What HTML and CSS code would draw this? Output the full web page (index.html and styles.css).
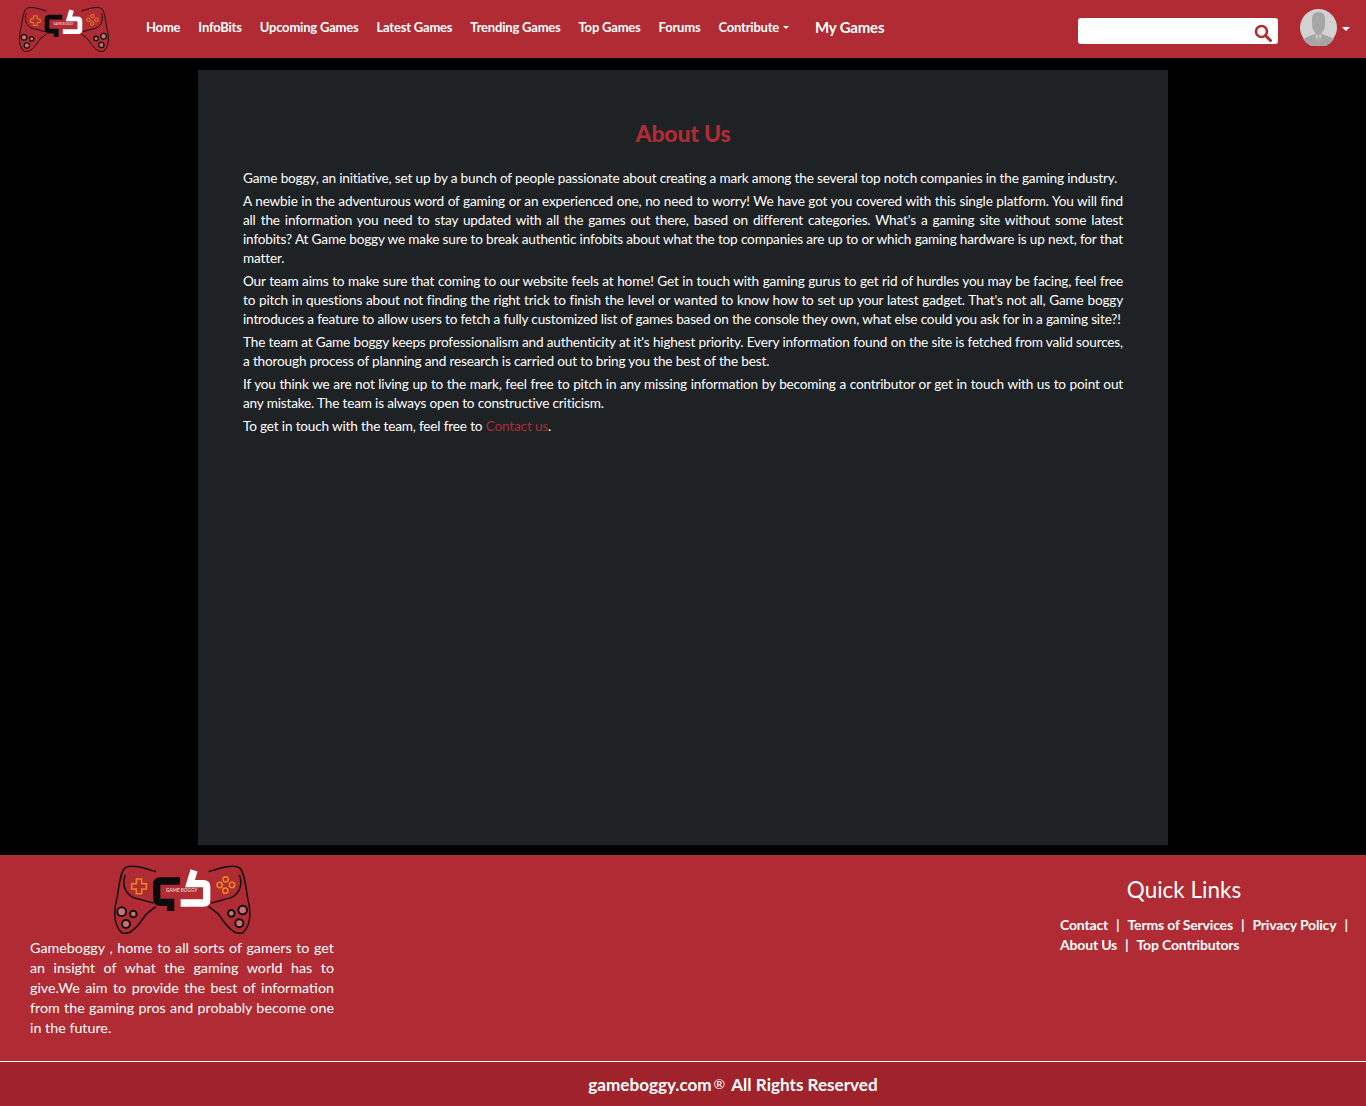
FILE: index.html
```html
<!DOCTYPE html>
<html lang="en">

<head>
    <meta charset="UTF-8">
    <title>About Us</title>
    <link rel="stylesheet" href="styles.css">
</head>

<body>
    <svg class="defs" width="0" height="0">
        <symbol id="logo" viewBox="70 25 415 210">
            <g fill="none" stroke="#111" stroke-width="4.500">
                <path d="M198 48C165 38 130 25 106 36C92 46 88 85 82 122C72 160 66 205 96 232C125 240 148 205 168 176L198 152"/>
                <path d="M106 58C96 82 102 112 130 126L190 142"/>
                <path d="M356 48C389 38 424 25 448 36C462 46 466 85 472 122C482 160 488 205 458 232C429 240 406 205 386 176L356 152"/>
                <path d="M448 58C458 82 452 112 424 126L364 142"/>
            </g>
            <g fill="none" stroke="#e8891c" stroke-width="4.500">
                <path d="M139 70h16v14h14v16h-14v14h-16v-14h-14v-16h14z"/>
                <circle cx="407" cy="71" r="8"/>
                <circle cx="389" cy="88" r="8"/>
                <circle cx="426" cy="88" r="8"/>
                <circle cx="406" cy="105" r="8"/>
            </g>
            <g fill="#c9727a" stroke="#111" stroke-width="6">
                <circle cx="95" cy="168" r="13"/>
                <circle cx="130" cy="175" r="10"/>
                <circle cx="108" cy="205" r="12"/>
                <circle cx="458" cy="163" r="13"/>
                <circle cx="424" cy="173" r="10"/>
                <circle cx="448" cy="203" r="12"/>
            </g>
            <path d="M270 76H212Q200 76 200 88V128Q200 140 212 140H242V166" fill="none" stroke="#0b0b0b" stroke-width="22"/>
            <path d="M312 44L300 84H340Q350 84 350 94V132Q350 142 340 142H272" fill="none" stroke="#fff" stroke-width="22"/>
        </symbol>
    </svg>

    <header class="topbar">
        <a href="#" class="brand">
            <svg class="brand-logo" viewBox="70 25 415 210">
                <use href="#logo" x="70" y="25" width="415" height="210"/>
                <text x="275" y="110" text-anchor="middle" class="logo-text">GAME BOGGY</text>
            </svg>
        </a>
        <nav class="nav">
            <a href="#">Home</a>
            <a href="#">InfoBits</a>
            <a href="#">Upcoming Games</a>
            <a href="#">Latest Games</a>
            <a href="#">Trending Games</a>
            <a href="#">Top Games</a>
            <a href="#">Forums</a>
            <a href="#" class="caret-link">Contribute</a>
            <a href="#" class="my-games">My Games</a>
        </nav>
        <div class="search">
            <svg class="search-icon" viewBox="0 0 18 18">
                <circle cx="7.500" cy="7.500" r="5.500" fill="none" stroke="#b02b33" stroke-width="2.600"/>
                <path d="M11.500 11.500L16.500 16.500" stroke="#b02b33" stroke-width="3" stroke-linecap="round"/>
            </svg>
        </div>
        <div class="user">
            <svg class="avatar" viewBox="0 0 37 37">
                <circle cx="18.500" cy="18.500" r="18.500" fill="#d2d2d2"/>
                <path d="M12 10Q12 3 18.500 3Q25 3 25 10V15Q25 21 22 23V25L30 28Q33 30 34 30A18.500 18.500 0 0 1 3 30Q4 30 7 28L15 25V23Q12 21 12 15Z" fill="#a6a6a6"/>
                <path d="M15.500 25L18.500 37L21.500 25L18.500 27Z" fill="#d2d2d2"/>
                <path d="M17.500 27.500H19.500L20 36H17Z" fill="#a6a6a6"/>
            </svg>
            <span class="user-caret"></span>
        </div>
    </header>

    <main class="page">
        <section class="about">
            <h1>About Us</h1>
            <p>Game boggy, an initiative, set up by a bunch of people passionate about creating a mark among the several top notch companies in the gaming industry.</p>
            <p>A newbie in the adventurous word of gaming or an experienced one, no need to worry! We have got you covered with this single platform. You will find all the information you need to stay updated with all the games out there, based on different categories. What's a gaming site without some latest infobits? At Game boggy we make sure to break authentic infobits about what the top companies are up to or which gaming hardware is up next, for that matter.</p>
            <p>Our team aims to make sure that coming to our website feels at home! Get in touch with gaming gurus to get rid of hurdles you may be facing, feel free to pitch in questions about not finding the right trick to finish the level or wanted to know how to set up your latest gadget. That's not all, Game boggy introduces a feature to allow users to fetch a fully customized list of games based on the console they own, what else could you ask for in a gaming site?!</p>
            <p>The team at Game boggy keeps professionalism and authenticity at it's highest priority. Every information found on the site is fetched from valid sources, a thorough process of planning and research is carried out to bring you the best of the best.</p>
            <p>If you think we are not living up to the mark, feel free to pitch in any missing information by becoming a contributor or get in touch with us to point out any mistake. The team is always open to constructive criticism.</p>
            <p>To get in touch with the team, feel free to <a href="#">Contact us</a>.</p>
        </section>
    </main>

    <footer class="footer">
        <div class="footer-top">
            <div class="footer-about">
                <svg class="footer-logo" viewBox="70 25 415 210">
                    <use href="#logo" x="70" y="25" width="415" height="210"/>
                    <text x="275" y="110" text-anchor="middle" class="logo-text">GAME BOGGY</text>
                </svg>
                <p>Gameboggy , home to all sorts of gamers to get an insight of what the gaming world has to give.We aim to provide the best of information from the gaming pros and probably become one in the future.</p>
            </div>
            <div class="quick-links">
                <h2>Quick Links</h2>
                <div class="links">
                    <a href="#" class="sep">Contact</a>
                    <a href="#" class="sep">Terms of Services</a>
                    <a href="#" class="sep">Privacy Policy</a>
                    <a href="#" class="sep">About Us</a>
                    <a href="#">Top Contributors</a>
                </div>
            </div>
        </div>
        <div class="copyright">gameboggy.com<span class="reg">®</span>All Rights Reserved</div>
    </footer>
</body>

</html>
```

FILE: styles.css
```css
* {
    box-sizing: border-box;
}

body {
    margin: 0;
    background: #000;
    color: #fff;
    font-family: Lato, "Noto Sans", sans-serif;
    font-size: 13.6px;
    letter-spacing: -0.17px;
}

a {
    color: inherit;
    text-decoration: none;
}

.defs {
    position: absolute;
}

.logo-text {
    font-size: 14px;
    font-weight: bold;
    fill: #e8c8c8;
    letter-spacing: 0;
}

/* top bar */
.topbar {
    display: flex;
    align-items: center;
    height: 58px;
    background: #b02b33;
}

.brand {
    display: flex;
    margin-left: 18px;
}

.brand-logo {
    width: 92px;
    height: 46px;
}

.nav {
    display: flex;
    align-items: center;
    gap: 18px;
    margin-left: 36px;
    margin-top: -5px;
    font-size: 13px;
    font-weight: 700;
    letter-spacing: -0.2px;
}

.caret-link::after {
    content: "";
    display: inline-block;
    margin-left: 4px;
    vertical-align: 3px;
    border-top: 3px solid #fff;
    border-left: 3px solid transparent;
    border-right: 3px solid transparent;
}

.my-games {
    margin-left: 8px;
    font-size: 15px;
}

.search {
    display: flex;
    align-items: center;
    justify-content: flex-end;
    width: 200px;
    height: 26px;
    margin-top: 4px;
    margin-left: auto;
    padding-right: 6px;
    background: #fff;
    border-radius: 3px;
}

.search-icon {
    width: 18px;
    height: 18px;
    margin-top: 3px;
}

.user {
    display: flex;
    align-items: center;
    margin-top: -3px;
    margin-left: 22px;
    margin-right: 16px;
}

.avatar {
    width: 37px;
    height: 37px;
}

.user-caret {
    margin-left: 5px;
    margin-top: 2px;
    border-top: 4px solid #fff;
    border-left: 4px solid transparent;
    border-right: 4px solid transparent;
}

/* about */
.page {
    padding: 12px 0 10px;
}

.about {
    width: 970px;
    height: 775px;
    margin: 0 auto;
    padding: 47px 45px 0;
    background: #1e2225;
}

.about h1 {
    margin: 0 0 19px;
    color: #b02b33;
    font-size: 23px;
    line-height: 33px;
    font-weight: 900;
    letter-spacing: -0.2px;
    text-align: center;
}

.about p {
    margin: 0 0 4px;
    line-height: 19px;
    text-align: justify;
}

.about a {
    color: #b02b33;
}

/* footer */
.footer {
    background: #b02b33;
}

.footer-top {
    display: flex;
    justify-content: space-between;
    height: 206px;
    padding: 9px 6px 0 30px;
}

.footer-about {
    width: 304px;
}

.footer-logo {
    display: block;
    width: 139px;
    height: 70px;
    margin: 0 auto 4px;
}

.footer-about p {
    margin: 0;
    line-height: 20px;
    font-size: 14.3px;
    letter-spacing: 0;
    text-align: justify;
}

.quick-links {
    width: 300px;
}

.quick-links h2 {
    margin: 9px 0 9px;
    padding-right: 52px;
    font-size: 22.5px;
    line-height: 33px;
    font-weight: 400;
    letter-spacing: 0;
    text-align: center;
}

.links {
    display: flex;
    flex-wrap: wrap;
    line-height: 20px;
    font-size: 14px;
    font-weight: 700;
}

.sep::after {
    content: "|";
    margin: 0 8px;
}

.copyright {
    height: 45px;
    padding-left: 100px;
    border-top: 1px solid #fff;
    background: #a0222a;
    font-size: 17.1px;
    font-weight: 700;
    letter-spacing: 0;
    line-height: 43px;
    text-align: center;
}

.reg {
    margin: 0 6px 0 2px;
    font-size: 14px;
    font-weight: 400;
    vertical-align: 2px;
}
```
